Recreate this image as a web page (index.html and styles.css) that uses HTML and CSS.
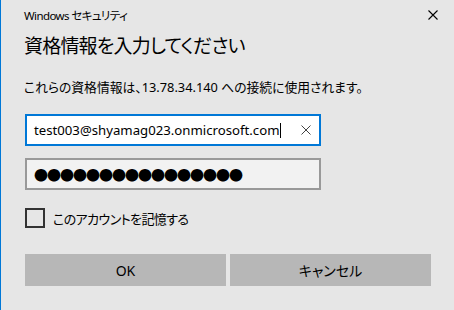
FILE: index.html
```html
<!DOCTYPE html>
<html>
<head>
    <title>Windows セキュリティ</title>
    <link rel="stylesheet" href="styles.css">
</head>
<body>
    <div class="dialog">
        <div class="titlebar">
            <span>Windows セキュリティ</span>
            <svg class="close" width="10" height="10" viewBox="0 0 10 10">
                <path d="M0.5 0.5 L9.5 9.5 M9.5 0.5 L0.5 9.5" stroke="#000" stroke-width="1.1" fill="none"/>
            </svg>
        </div>
        <h1>資格情報を入力してください</h1>
        <p class="desc">これらの資格情報は、13.78.34.140 への接続に使用されます。</p>

        <div class="field focused">
            <span class="value">test003@shyamag023.onmicrosoft.com</span><span class="caret"></span>
            <svg class="clear" width="10" height="10" viewBox="0 0 10 10">
                <path d="M0.5 0.5 L9.5 9.5 M9.5 0.5 L0.5 9.5" stroke="#444" stroke-width="1" fill="none"/>
            </svg>
        </div>
        <div class="field password">
            <span class="dots">●●●●●●●●●●●●●●●●</span>
        </div>

        <label class="remember">
            <span class="box"></span>
            <span>このアカウントを記憶する</span>
        </label>

        <div class="buttons">
            <button class="btn">OK</button>
            <button class="btn">キャンセル</button>
        </div>
    </div>
</body>
</html>
```

FILE: styles.css
```css
body {
    margin: 0;
    font-family: "Noto Sans", "Noto Sans CJK JP", sans-serif;
    font-feature-settings: "palt";
    color: #000;
}
.dialog {
    width: 454px;
    height: 310px;
    box-sizing: border-box;
    background: #e6e6e6;
    border-left: 1px solid #0078d7;
    padding-left: 24px;
    padding-right: 23px;
}
.titlebar {
    height: 30px;
    display: flex;
    align-items: center;
    justify-content: space-between;
    font-size: 11.5px;
    letter-spacing: -0.6px;
    margin-left: -1px;
    margin-right: -7px;
}
.close {
    display: block;
}
h1 {
    margin: 2px 0 0 -1px;
    font-size: 19px;
    font-weight: normal;
    line-height: 28px;
    letter-spacing: -0.8px;
}
.desc {
    margin: 17px 0 0 -1px;
    font-size: 12.8px;
    line-height: 20px;
}
.field {
    width: 296px;
    height: 32px;
    box-sizing: border-box;
    border: 2px solid #999;
    background: #f2f2f2;
    margin-top: 12px;
    display: flex;
    align-items: center;
    padding-left: 7px;
}
.field.focused {
    margin-top: 17px;
    border-color: #0078d7;
    background: #fff;
    font-size: 13.2px;
}
.caret {
    width: 1px;
    height: 15px;
    background: #000;
    margin-left: 1px;
}
.clear {
    margin-left: auto;
    margin-right: 8px;
}
.dots {
    font-family: "Noto Sans CJK JP", sans-serif;
    font-size: 14px;
    letter-spacing: -1px;
    line-height: 1;
}
.remember {
    display: flex;
    align-items: center;
    margin-top: 18px;
    font-size: 13px;
    letter-spacing: -0.6px;
    gap: 8px;
}
.box {
    width: 20px;
    height: 20px;
    box-sizing: border-box;
    border: 2px solid #333;
}
.buttons {
    display: flex;
    gap: 4px;
    margin-top: 26px;
}
.btn {
    width: 201px;
    height: 32px;
    border: none;
    background: #b7b7b7;
    font-family: inherit;
    font-feature-settings: "palt";
    font-size: 14px;
    color: #000;
    padding: 0;
}
```
